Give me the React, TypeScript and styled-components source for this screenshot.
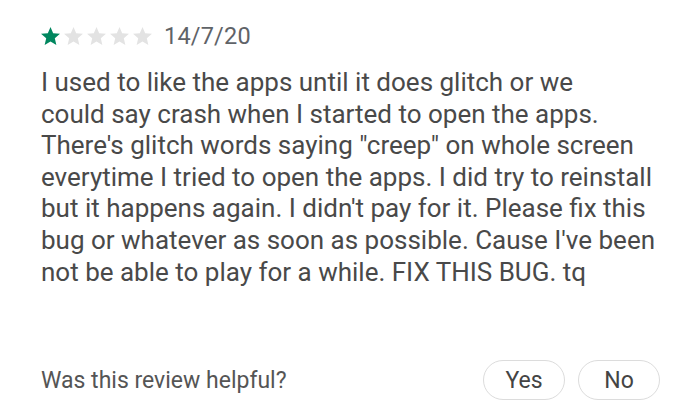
import styled, { createGlobalStyle } from 'styled-components'

const GlobalStyle = createGlobalStyle`
  body {
    margin: 0;
    background: #fff;
    font-family: Roboto, "Liberation Sans", sans-serif;
  }
`

const Card = styled.article`
  width: 700px;
  height: 418px;
  box-sizing: border-box;
  padding: 21px 40px 0 41px;
  display: flex;
  flex-direction: column;
`

const Header = styled.div`
  display: flex;
  align-items: center;
  gap: 12px;
  height: 30px;
`

const Stars = styled.div`
  display: flex;
  gap: 4px;
`

const Date = styled.span`
  font-size: 23.5px;
  color: #5f6368;
  letter-spacing: 0.2px;
`

const Body = styled.p`
  margin: 16px 0 0;
  font-size: 26px;
  line-height: 31.6px;
  color: #494949;
  white-space: nowrap;
`

const Footer = styled.div`
  margin-top: auto;
  margin-bottom: 18px;
  display: flex;
  align-items: center;
  justify-content: space-between;
`

const Question = styled.span`
  font-size: 23px;
  color: #555;
`

const Buttons = styled.div`
  display: flex;
  gap: 13px;
`

const Pill = styled.button`
  width: 82px;
  height: 40px;
  border: 1.5px solid #dcdcdc;
  border-radius: 20px;
  background: #fff;
  font-family: Roboto, "Liberation Sans", sans-serif;
  font-size: 23px;
  color: #444;
  padding: 0;
`

function Star({ filled }: { filled: boolean }) {
  return (
    <svg width="19" height="18" viewBox="2 2 20 19">
      <path
        d="M12 17.27L18.18 21l-1.64-7.03L22 9.24l-7.19-.61L12 2 9.19 8.63 2 9.24l5.46 4.73L5.82 21z"
        fill={filled ? '#01875f' : '#e3e3e3'}
      />
    </svg>
  )
}

export default function App() {
  const rating = 1
  return (
    <>
      <GlobalStyle />
      <Card>
        <Header>
          <Stars>
            {[0, 1, 2, 3, 4].map(i => (
              <Star key={i} filled={i < rating} />
            ))}
          </Stars>
          <Date>14/7/20</Date>
        </Header>
        <Body>
          I used to like the apps until it does glitch or we
          <br />
          could say crash when I started to open the apps.
          <br />
          There's glitch words saying "creep" on whole screen
          <br />
          everytime I tried to open the apps. I did try to reinstall
          <br />
          but it happens again. I didn't pay for it. Please fix this
          <br />
          bug or whatever as soon as possible. Cause I've been
          <br />
          not be able to play for a while. FIX THIS BUG. tq
        </Body>
        <Footer>
          <Question>Was this review helpful?</Question>
          <Buttons>
            <Pill>Yes</Pill>
            <Pill>No</Pill>
          </Buttons>
        </Footer>
      </Card>
    </>
  )
}
